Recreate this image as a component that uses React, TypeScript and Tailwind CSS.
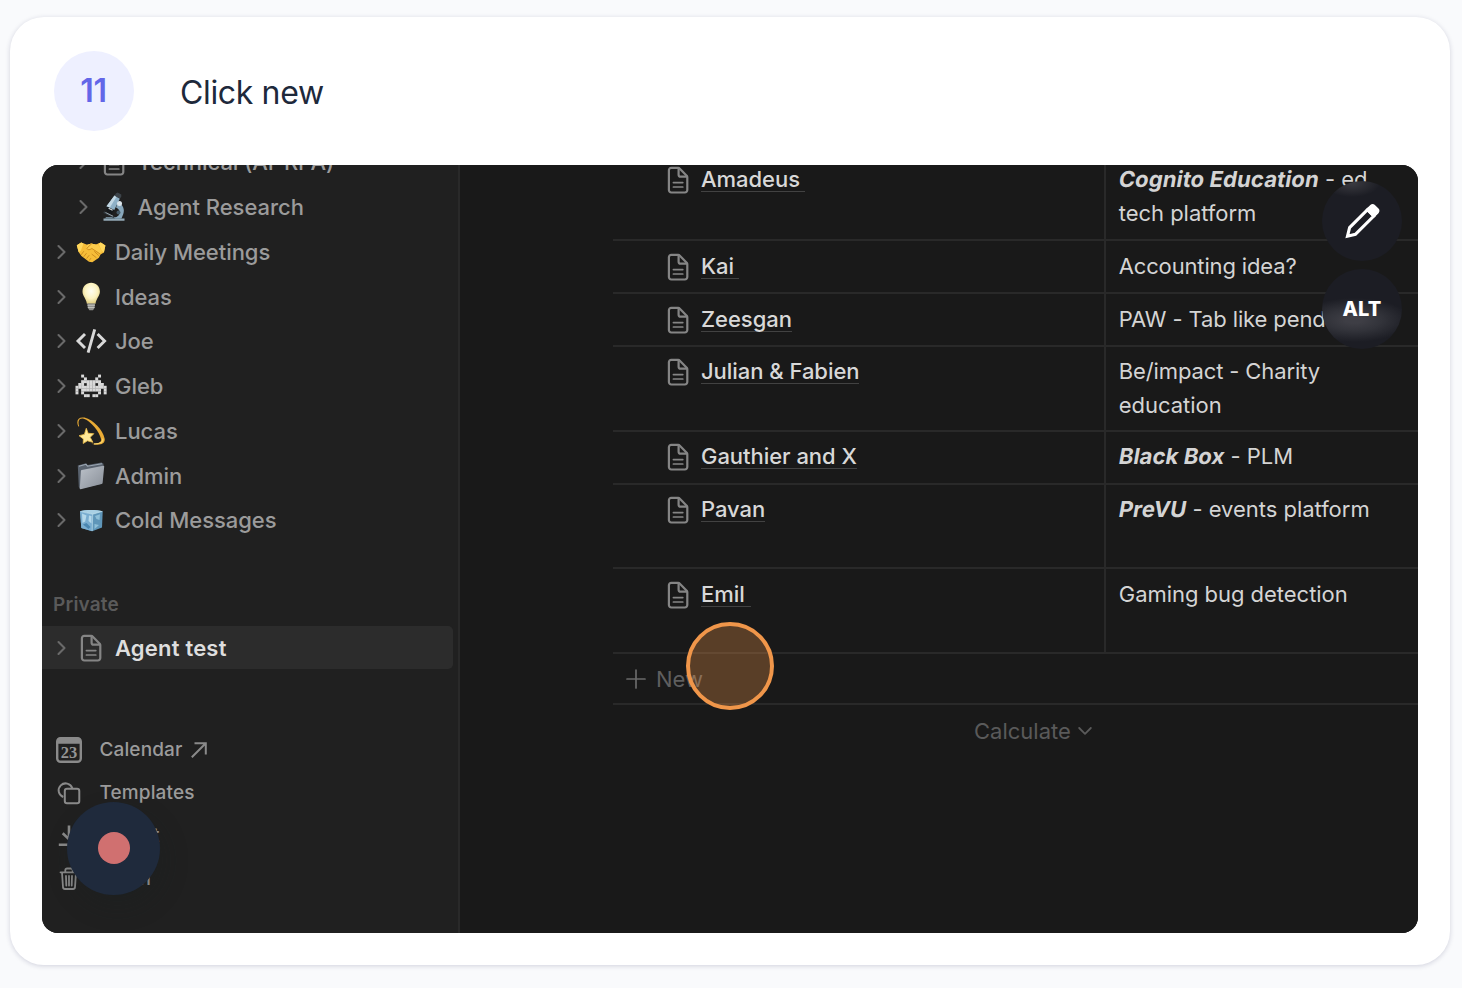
import type { ReactNode } from "react";

function Chevron() {
  return (
    <svg className="h-5 w-3 shrink-0 text-[#6a6a6a]" viewBox="0 0 12 20" fill="none" stroke="currentColor" strokeWidth="2.1" strokeLinecap="round" strokeLinejoin="round">
      <path d="M2.500 4 8.500 10l-6 6" />
    </svg>
  );
}

function PageIcon() {
  return (
    <svg className="h-7 w-[22px] shrink-0 text-[#858585]" viewBox="0 0 22 28" fill="none" stroke="currentColor" strokeWidth="2.200" strokeLinejoin="round" strokeLinecap="round">
      <path d="M4.300 1.900h6.900a2 2 0 0 1 1.400.6l7.100 7.200a2 2 0 0 1 .6 1.400v13a2.400 2.400 0 0 1-2.400 2.400H4.300a2.400 2.400 0 0 1-2.400-2.400V4.300a2.400 2.400 0 0 1 2.400-2.400Z" />
      <path d="M11.600 2.200v6.500a2 2 0 0 0 2 2h6.400" />
      <path d="M6.400 16.600h9.400M6.400 21h9.400" strokeWidth="1.700" />
    </svg>
  );
}

function Microscope() {
  return (
    <svg className="h-[30px] w-[30px]" viewBox="0 0 30 30">
      <path d="M4.5 26.5h21v2.3h-21z" fill="#93a9b6" />
      <path d="M7 25h13.5l1.5 1.8H6z" fill="#6d8492" />
      <path d="M19 10.5c5 2 7 7 5.300 11.500L22.500 26.500h-7l4-3c2-3 1.500-6-2.500-8z" fill="#88a7bb" />
      <path d="m15.500 3.600 5.400 3-5.600 11.400-7.800-3.700z" fill="#8eb0c6" />
      <path d="m15.500 3.600 2 1.100-6.600 10.800-3.400-1.200z" fill="#c3d8e4" />
      <path d="m16.800 1.600 1.800-1.200 3.700 2-.1 2.300-1.300 2-5.200-2.900z" fill="#3d444a" />
      <path d="m8.200 14.800 7 3.600-2.600 3.800-5.300-3.100z" fill="#15191c" />
      <path d="m9.600 16.300 4 2" stroke="#d5dde1" strokeWidth="1.200" />
      <path d="m5 19.300 10.500 5.200-.8 1.600-10.300-5.200z" fill="#333b41" />
      <path d="m6.500 20.500 7.500 3.700" stroke="#a9b8c0" strokeWidth=".8" />
      <circle cx="20.500" cy="11.500" r="2.500" fill="#dbe5eb" />
      <circle cx="19.500" cy="20.500" r="2" fill="#465b69" />
    </svg>
  );
}

function Handshake() {
  return (
    <svg className="h-[30px] w-[30px]" viewBox="0 0 30 30">
      <path d="M.8 8.200 5.200 5.600l6 2.200 4-1.200 4.600.8 5-1.800 4.600 2.800-1.500 7-3.400 2.200-1.600 3.200-6.600 4.500-3.300-.6-7.600-5.800-2.800-4z" fill="#f6bd38" />
      <path d="m.8 8.200 4.400-2.600 2.300 1-2.700 7.100-2.200 1.200zM29.400 8.400l-4.600-2.800-2.300 1 3.200 7.200 2.200 1.600z" fill="#ffd75c" />
      <path d="m11.200 7.800 4-1.200 4.600.8 3 1 3.200 6.400-1.800 1.500-8.200-5-4.400 1.400-1.300-1.600z" fill="#fbcb4b" />
      <path d="m15.600 6.800-4.800 4.500c.7 2 3.100 1.700 5.100.2l8 5.400M7.600 14.500l-2.200 3M10.300 16.500l-2.400 3M13 18.500l-2.200 2.800M14.700 21.500l-1.300 1.800M16 17.300l4.200 3.300M18.500 14.600l4 3.700" fill="none" stroke="#c98a1d" strokeWidth=".9" strokeLinecap="round" strokeLinejoin="round" />
    </svg>
  );
}

function Bulb() {
  return (
    <svg className="h-[30px] w-[30px]" viewBox="0 0 30 30">
      <defs>
        <radialGradient id="bulb" cx=".5" cy=".4" r=".6">
          <stop offset="0" stopColor="#fffef2" />
          <stop offset=".6" stopColor="#fcf3c0" />
          <stop offset="1" stopColor="#e0cd80" />
        </radialGradient>
      </defs>
      <path d="M15.200 .7c5 0 8.700 3.700 8.700 8.700 0 4.700-3.700 6.600-4.400 12.300h-8.600C10.200 16 6.500 14.100 6.500 9.400c0-5 3.700-8.700 8.700-8.700Z" fill="url(#bulb)" />
      <path d="M11.300 21.500h7.800l-.6 4.500-1.500 2.200h-3.600L11.900 26z" fill="#8f8f8b" />
      <path d="M11.500 23.300h7.400M11.800 25.500h6.800" stroke="#c4c4bf" strokeWidth=".9" />
    </svg>
  );
}

function CodeMark() {
  return (
    <svg className="h-[30px] w-8 shrink-0" viewBox="0 0 32 30" fill="none" stroke="#d9d9d9" strokeWidth="2.900">
      <path d="M10 8 3 15l7 7M22.600 8l7 7-7 7M19.700 3.400l-6.600 23.200" />
    </svg>
  );
}

const INVADER = [
  "..#.....#..",
  "...#...#...",
  "..#######..",
  ".##.###.##.",
  "###########",
  "#.#######.#",
  "#.#.....#.#",
  "...##.##...",
];

function Invader() {
  return (
    <svg className="h-[30px] w-8 shrink-0" viewBox="0 0 32 30" fill="#d9d9d9">
      {INVADER.flatMap((line, y) =>
        line.split("").map((c, x) => (c === "#" ? <rect key={`${x}-${y}`} x={0.5 + x * 2.82} y={3.6 + y * 2.8} width="2.950" height="2.950" /> : null)),
      )}
    </svg>
  );
}

function Dizzy() {
  return (
    <svg className="h-[30px] w-[30px]" viewBox="0 0 30 30">
      <path d="M2.300 10.500C-.5 3.500 3 .6 8.500 1.600c9 2 18.500 12.900 20.100 20.900 1.200 5.500-4.800 7.700-13.300 5.200 5.500.3 10.300-.6 9.800-4.500C23.800 16 14.500 4.500 7.700 2.700 3.300 1.600 1.300 5 3.200 10.300z" fill="#e9ab35" />
      <path d="M18 27.800c5 .4 9.500-1.300 8.800-5.300" fill="none" stroke="#f9d46a" strokeWidth="1.200" />
      <path d="m10.300 12.300 1.800 5 5.700.4-3.600 3.600 2.700 5-5.500-1.500-4.200 2.700.2-4.500-4.300-3.300 5.300-1.300z" fill="#ffe998" stroke="#f3c14a" strokeWidth=".8" strokeLinejoin="round" />
    </svg>
  );
}

function Folder() {
  return (
    <svg className="h-[30px] w-[30px]" viewBox="0 0 30 30">
      <defs>
        <linearGradient id="folder" x1="0" y1="0" x2="1" y2="1">
          <stop offset="0" stopColor="#bcc2ca" />
          <stop offset="1" stopColor="#888e97" />
        </linearGradient>
      </defs>
      <path d="M1.800 4.600 10 2.300l1.600 1.800L25.500 1.500l2 1.200-1.500 20L4 27.800 2.800 26z" fill="#59626e" />
      <path d="M3 5.300 10 3.300l1.500 1.900L26 2.700" fill="none" stroke="#9ca7b3" strokeWidth="1.100" />
      <path d="M5.800 9 27.300 4.700c.6-.1 1 .3.900.9L26.600 22c-.1.600-.5 1-1.100 1.100L4.700 28.200c-.6.1-1-.2-.9-.8L4.900 10c0-.5.400-.9.900-1Z" fill="url(#folder)" />
    </svg>
  );
}

function IceCube() {
  return (
    <svg className="h-[30px] w-[30px]" viewBox="0 0 30 30">
      <path d="M4 6.200c4-1.500 17-1.700 22.700 0L26 22.500l-9.800 3.800L5.300 23z" fill="#5f96b9" />
      <path d="M4 6.200c4-1.500 17-1.700 22.700 0l-10 3z" fill="#a9d0e4" />
      <path d="m4 6.200 12.700 3-.5 17.100L5.300 23z" fill="#79add0" />
      <path d="m6 8.500 4.500 2-1.300 6L6.500 18zM13 10.500l2.500.5v7.500l-3-2.500z" fill="#b4d8ea" />
      <path d="m19 11 5-1.800-.5 5.800-3-1zM18.500 19l4.500 1-4.500 4z" fill="#8fc0d9" />
      <path d="m7 19.500 3.500-1.500 4 4-2 2z" fill="#4a86b0" />
      <path d="M16.700 9.200 16.200 26M4.500 6.500l12.200 2.700 9.500-2.800" fill="none" stroke="#c9e5f0" strokeWidth=".6" />
    </svg>
  );
}

function NavRow({ icon, label, nested = false }: { icon: ReactNode; label: string; nested?: boolean }) {
  return (
    <div className={`flex h-[44.75px] shrink-0 items-center ${nested ? "pl-[36px]" : "pl-[13.500px]"}`}>
      <Chevron />
      <div className="ml-[8.500px] flex w-8 shrink-0 items-center justify-center pr-[2px]">{icon}</div>
      <span className="ml-[7px] text-[22px] leading-none font-[540] tracking-[-0.040px] whitespace-nowrap text-[#9b9b9b]">{label}</span>
    </div>
  );
}

function Sidebar() {
  return (
    <aside className="flex w-[418px] shrink-0 flex-col border-r-2 border-[#292929] bg-[#202020]">
      <nav className="-mt-[25px] flex flex-col">
        <NavRow nested icon={<PageIcon />} label="Technical (AI-RPA)" />
        <NavRow nested icon={<Microscope />} label="Agent Research" />
        <NavRow icon={<Handshake />} label="Daily Meetings" />
        <NavRow icon={<Bulb />} label="Ideas" />
        <NavRow icon={<CodeMark />} label="Joe" />
        <NavRow icon={<Invader />} label="Gleb" />
        <NavRow icon={<Dizzy />} label="Lucas" />
        <NavRow icon={<Folder />} label="Admin" />
        <NavRow icon={<IceCube />} label="Cold Messages" />
      </nav>
      <div className="mt-[51.250px] flex h-5 shrink-0 items-center pl-[11px] text-[19px] leading-none font-semibold tracking-[0.200px] text-[#5a5a5a]">Private</div>
      <div className="mt-[12px] mr-[5px] flex h-[43px] shrink-0 items-center rounded-r-[5px] bg-[#2c2c2c] pl-[13.500px]">
        <Chevron />
        <div className="ml-[8.500px] flex w-8 items-center justify-center pr-[2px]"><PageIcon /></div>
        <span className="ml-[7px] text-[22px] leading-none font-semibold tracking-[0.2px] text-[#dedede]">Agent test</span>
      </div>
      <div className="mt-[59px] flex flex-col text-[19px] leading-none font-[540] tracking-[0.120px] text-[#9b9b9b]">
        <div className="flex h-[43px] items-center pl-[13px]">
          <svg className="h-[28px] w-[28px]" viewBox="0 0 28 28">
            <rect x="2.200" y="2.200" width="23.600" height="23.600" rx="3.400" fill="none" stroke="#8a8a8a" strokeWidth="2.400" />
            <path d="M2 7.800V5a3.500 3.500 0 0 1 3.500-3.500h17A3.500 3.500 0 0 1 26 5v2.800z" fill="#8a8a8a" />
            <text x="14" y="21.500" textAnchor="middle" fontSize="16.500" fontWeight="700" fill="#949494" fontFamily="Liberation Serif, serif">23</text>
          </svg>
          <span className="ml-[16.500px]">Calendar</span>
          <svg className="ml-[8px] h-[18px] w-[18px]" viewBox="0 0 18 18" fill="none" stroke="#8a8a8a" strokeWidth="2">
            <path d="M1.800 16.200 15.500 2.500M4.500 2.200h11.300v11.300" />
          </svg>
        </div>
        <div className="flex h-[43px] items-center pl-[13px]">
          <svg className="h-[28px] w-[28px]" viewBox="0 0 28 28" fill="none" stroke="#8a8a8a" strokeWidth="2">
            <path d="M8.300 18a7 7 0 1 1 9-8.800" />
            <rect x="9.800" y="9.800" width="14.500" height="14.500" rx="2.200" />
          </svg>
          <span className="ml-[16.500px]">Templates</span>
        </div>
        <div className="flex h-[43px] items-center pl-[13px]">
          <svg className="h-[28px] w-[28px]" viewBox="0 0 28 28" fill="none" stroke="#8a8a8a" strokeWidth="2.600">
            <path d="M14 3.500v13.500M7.700 11.300l6.300 6 6.300-6M3.800 22.700h20.400" />
          </svg>
          <span className="ml-[16.500px]">Import</span>
        </div>
        <div className="flex h-[43px] items-center pl-[13px]">
          <svg className="h-[28px] w-[28px]" viewBox="0 0 28 28" fill="none" stroke="#8a8a8a" strokeWidth="1.800" strokeLinecap="round" strokeLinejoin="round">
            <path d="M5.500 7.300h17M10.300 7V5.200a1.700 1.700 0 0 1 1.700-1.700h4a1.700 1.700 0 0 1 1.700 1.700V7M7 7.500l1 14.700a2 2 0 0 0 2 1.800h8a2 2 0 0 0 2-1.800L21 7.500M11 11l.3 9.500M14 11v9.500M17 11l-.3 9.500" />
          </svg>
          <span className="ml-[16.500px]">Trash</span>
        </div>
      </div>
    </aside>
  );
}

function Slanted({ children }: { children: ReactNode }) {
  return <span className="inline-block -skew-x-[10deg] font-[650] tracking-[0.120px]">{children}</span>;
}

function TableRow({ name, height, pad = "pt-[9px]", children, underline = "" }: { name: string; height: string; pad?: string; children: ReactNode; underline?: string }) {
  return (
    <div className={`flex shrink-0 border-b-2 border-[#292929] ${height}`}>
      <div className={`flex w-[493px] shrink-0 items-start border-r-2 border-[#292929] pl-[54px] ${pad}`}>
        <div className="flex h-[34px] items-center"><PageIcon /></div>
        <span className={`mt-[4px] ml-[12px] h-[25px] border-b-[1.500px] border-[#424242] text-[22px] leading-[24px] font-[550] tracking-[-0.040px] whitespace-nowrap text-[#d8d8d8] ${underline}`}>{name}</span>
      </div>
      <div className={`pl-[12.750px] text-[22px] leading-[33.600px] font-[440] tracking-[-0.030px] whitespace-nowrap text-[#d4d4d4] ${pad}`}>{children}</div>
    </div>
  );
}

function Database() {
  return (
    <main className="flex min-w-0 flex-1 flex-col bg-[#191919] pl-[153px]">
      <TableRow name="Amadeus" height="h-[76px]" pad="pt-0 -mt-[2px]" underline="pr-[5px]">
        <Slanted>Cognito Education</Slanted> - ed<br />tech platform
      </TableRow>
      <TableRow name="Kai" height="h-[53px]" underline="pr-[5px]"><span className="tracking-[-0.150px]">Accounting idea?</span></TableRow>
      <TableRow name="Zeesgan" height="h-[53px]"><span className="tracking-[-0.120px]">PAW - Tab like pend</span></TableRow>
      <TableRow name="Julian & Fabien" height="h-[85px]" pad="pt-[8px]"><span className="tracking-[-0.120px]">Be/impact - Charity</span><br />education</TableRow>
      <TableRow name="Gauthier and X" height="h-[53px]" pad="pt-[8px]"><Slanted>Black Box</Slanted> - PLM</TableRow>
      <TableRow name="Pavan" height="h-[84px]" pad="pt-[8px]"><Slanted>PreVU</Slanted> - events platform</TableRow>
      <TableRow name="Emil" height="h-[85px]" underline="pr-[6px]">Gaming bug detection</TableRow>
      <div className="flex h-[51px] shrink-0 items-center border-b-2 border-[#292929] pl-[12.500px] text-[22px] leading-none font-[440] text-[#5f5f5f]">
        <svg className="h-[20px] w-[20px]" viewBox="0 0 20 20" stroke="#6a6a6a" strokeWidth="1.700" strokeLinecap="round">
          <path d="M10 1v18M1 10h18" />
        </svg>
        <span className="ml-[10.500px]">New</span>
      </div>
      <div className="flex h-[52px] shrink-0 items-center pl-[361px] text-[22px] leading-none font-[440] text-[#5a5a5a]">
        <span>Calculate</span>
        <svg className="ml-[7px] h-[14px] w-[14px]" viewBox="0 0 14 14" fill="none" stroke="#5a5a5a" strokeWidth="1.800" strokeLinecap="round" strokeLinejoin="round">
          <path d="m1.200 4 5.800 5.800L12.800 4" />
        </svg>
      </div>
    </main>
  );
}

export default function App() {
  return (
    <div className="flex h-[988px] w-[1462px] overflow-hidden bg-[#f9fafc] pt-[17px] pl-[10px] font-[Inter,sans-serif]">
      <section className="flex h-[948px] w-[1440px] flex-col rounded-[34px] bg-white px-8 shadow-[0_1px_5px_rgba(30,27,75,0.18)]">
        <header className="flex h-[148px] shrink-0 pt-[34px] pl-3">
          <div className="flex h-20 w-20 items-center justify-center rounded-full bg-[#eef0ff] pr-px text-[32px] leading-none font-semibold tracking-[-0.300px] text-[#6366e8]">11</div>
          <h1 className="ml-[46px] h-20 text-[32px] leading-[83px] tracking-[-0.350px] text-[#1e293b]">Click new</h1>
        </header>
        <div className="relative flex h-[768px] w-[1376px] overflow-hidden rounded-2xl bg-[#191919]">
          <Sidebar />
          <Database />
          <div className="absolute top-[457px] left-[644px] h-[88px] w-[88px] rounded-full border-4 border-[#f0964a] bg-[#f0964a]/30" />
          <div className="absolute top-[636.500px] left-[25px] flex h-[93px] w-[93px] items-center justify-center rounded-full bg-[#1f2a3c] shadow-[4px_12px_24px_rgba(24,30,32,0.25)]">
            <div className="h-8 w-8 rounded-full bg-[#d07070]" />
          </div>
          <div className="absolute top-4 left-[1280px] flex h-20 w-20 items-center justify-center rounded-full bg-[#1c1d24] bg-[radial-gradient(ellipse_28px_14px_at_30px_2px,#3b3b41,transparent)]">
            <svg className="h-10 w-10" viewBox="0 0 40 40" fill="none">
              <path d="M5.500 35.200 7.600 26.600 25.500 8.700l6.300 6.300L13.400 33.300z" stroke="#fff" strokeWidth="3.100" strokeLinejoin="miter" />
              <path d="m23.500 8.700 4.800-4.700c1.300-1.300 3.300-1.300 4.600 0l3.600 3.600c1.300 1.300 1.300 3.300 0 4.600l-4.800 4.800z" fill="#fff" />
            </svg>
          </div>
          <div className="absolute top-[104px] left-[1280px] flex h-20 w-20 items-center justify-center rounded-full bg-[#1c1d24] bg-[radial-gradient(ellipse_56px_22px_at_32px_51px,#3e3e45_15%,#32333a_50%,transparent)] text-[20px] leading-none font-extrabold tracking-[0.200px] text-white">ALT</div>
        </div>
      </section>
    </div>
  );
}
